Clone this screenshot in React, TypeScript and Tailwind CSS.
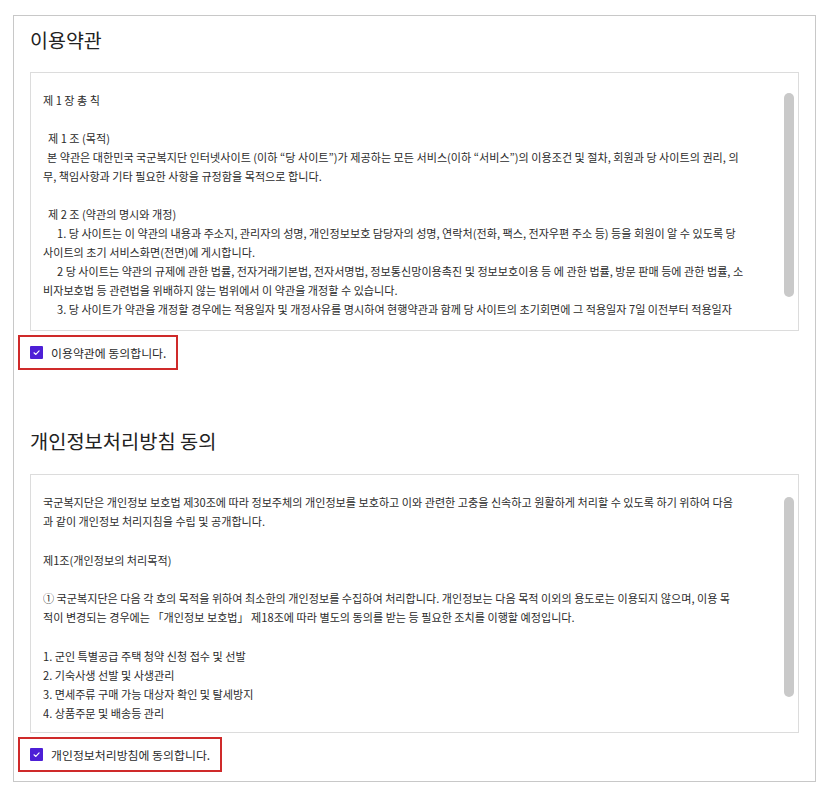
import React from "react";

type Line = { t: string; cls?: string };

const terms: Line[] = [
  { t: "제 1 장 총 칙" },
  { t: "" },
  { t: "제 1 조 (목적)", cls: "pl-[5px]" },
  {
    t: "본 약관은 대한민국 국군복지단 인터넷사이트 (이하 “당 사이트”)가 제공하는 모든 서비스(이하 “서비스”)의 이용조건 및 절차, 회원과 당 사이트의 권리, 의",
    cls: "pl-[4px]",
  },
  { t: "무, 책임사항과 기타 필요한 사항을 규정함을 목적으로 합니다." },
  { t: "" },
  { t: "제 2 조 (약관의 명시와 개정)", cls: "pl-[5px]" },
  {
    t: "1. 당 사이트는 이 약관의 내용과 주소지, 관리자의 성명, 개인정보보호 담당자의 성명, 연락처(전화, 팩스, 전자우편 주소 등) 등을 회원이 알 수 있도록 당",
    cls: "pl-[14px]",
  },
  { t: "사이트의 초기 서비스화면(전면)에 게시합니다." },
  {
    t: "2 당 사이트는 약관의 규제에 관한 법률, 전자거래기본법, 전자서명법, 정보통신망이용촉진 및 정보보호이용 등 에 관한 법률, 방문 판매 등에 관한 법률, 소",
    cls: "pl-[14px]",
  },
  { t: "비자보호법 등 관련법을 위배하지 않는 범위에서 이 약관을 개정할 수 있습니다." },
  {
    t: "3. 당 사이트가 약관을 개정할 경우에는 적용일자 및 개정사유를 명시하여 현행약관과 함께 당 사이트의 초기회면에 그 적용일자 7일 이전부터 적용일자",
    cls: "pl-[14px]",
  },
];

const privacy: Line[] = [
  {
    t: "국군복지단은 개인정보 보호법 제30조에 따라 정보주체의 개인정보를 보호하고 이와 관련한 고충을 신속하고 원활하게 처리할 수 있도록 하기 위하여 다음",
  },
  { t: "과 같이 개인정보 처리지침을 수립 및 공개합니다." },
  { t: "" },
  { t: "제1조(개인정보의 처리목적)" },
  { t: "" },
  {
    t: "① 국군복지단은 다음 각 호의 목적을 위하여 최소한의 개인정보를 수집하여 처리합니다. 개인정보는 다음 목적 이외의 용도로는 이용되지 않으며, 이용 목",
  },
  {
    t: "적이 변경되는 경우에는 「개인정보 보호법」 제18조에 따라 별도의 동의를 받는 등 필요한 조치를 이행할 예정입니다.",
  },
  { t: "" },
  { t: "1. 군인 특별공급 주택 청약 신청 접수 및 선발" },
  { t: "2. 기숙사생 선발 및 사생관리" },
  { t: "3. 면세주류 구매 가능 대상자 확인 및 탈세방지" },
  { t: "4. 상품주문 및 배송등 관리" },
];

function ScrollBox({
  lines,
  boxCls,
  colCls,
  lineCls,
  thumbCls,
}: {
  lines: Line[];
  boxCls: string;
  colCls: string;
  lineCls: string;
  thumbCls: string;
}) {
  return (
    <div className={`flex border border-[#dcdcdc] pl-[12px] pr-[4px] ${boxCls}`}>
      <div className={`flex-1 overflow-hidden text-[11.1px] text-[#2b2b2b] ${colCls}`}>
        {lines.map((l, i) =>
          l.t === "" ? (
            <div key={i} className={lineCls} />
          ) : (
            <div key={i} className={`whitespace-nowrap ${lineCls} ${l.cls ?? ""}`}>
              {l.t}
            </div>
          ),
        )}
      </div>
      <div className="ml-[8px] w-[10px]">
        <div className={`w-[10px] rounded-full bg-[#c9c9c9] ${thumbCls}`} />
      </div>
    </div>
  );
}

function Agree({ label }: { label: string }) {
  return (
    <div className="-ml-[12px] mt-[4px] inline-flex h-[35px] items-center border-2 border-[#cf2a2a] pl-[10px] pr-[10px]">
      <span className="flex h-[13px] w-[13px] items-center justify-center rounded-[1px] bg-[#4d1fd6]">
        <svg width="9" height="9" viewBox="0 0 10 10" fill="none">
          <path d="M2.2 5.3 L4.3 7.2 L7.9 3.1" stroke="white" strokeWidth="1.2" strokeLinecap="round" strokeLinejoin="round" />
        </svg>
      </span>
      <span className="ml-[8px] text-[11.9px] leading-[16px] text-[#2b2b2b]">{label}</span>
    </div>
  );
}

export default function App() {
  return (
    <div
      className="h-[792px] w-[827px] bg-white pl-[13px] pt-[15px]"
      style={{ fontFamily: '"Noto Sans CJK KR", "Noto Sans", sans-serif' }}
    >
      <div className="w-[803px] border border-[#c8c8c8] px-[16px] pb-[9px]">
        <h2 className="mb-[20px] mt-[12px] text-[19.5px] leading-[24px] text-[#222]">이용약관</h2>
        <ScrollBox
          lines={terms}
          boxCls="pt-[18px] pb-[11px]"
          colCls="h-[228px]"
          lineCls="h-[19px] leading-[19px]"
          thumbCls="mt-[2px] h-[204px]"
        />
        <Agree label="이용약관에 동의합니다." />

        <h2 className="mb-[21px] mt-[59px] text-[19.8px] leading-[24px] text-[#222]">
          개인정보처리방침 동의
        </h2>
        <ScrollBox
          lines={privacy}
          boxCls="pt-[18px] pb-[9px]"
          colCls="h-[230px]"
          lineCls="h-[19.2px] leading-[19.2px]"
          thumbCls="mt-[4px] h-[200px]"
        />
        <Agree label="개인정보처리방침에 동의합니다." />
      </div>
    </div>
  );
}
